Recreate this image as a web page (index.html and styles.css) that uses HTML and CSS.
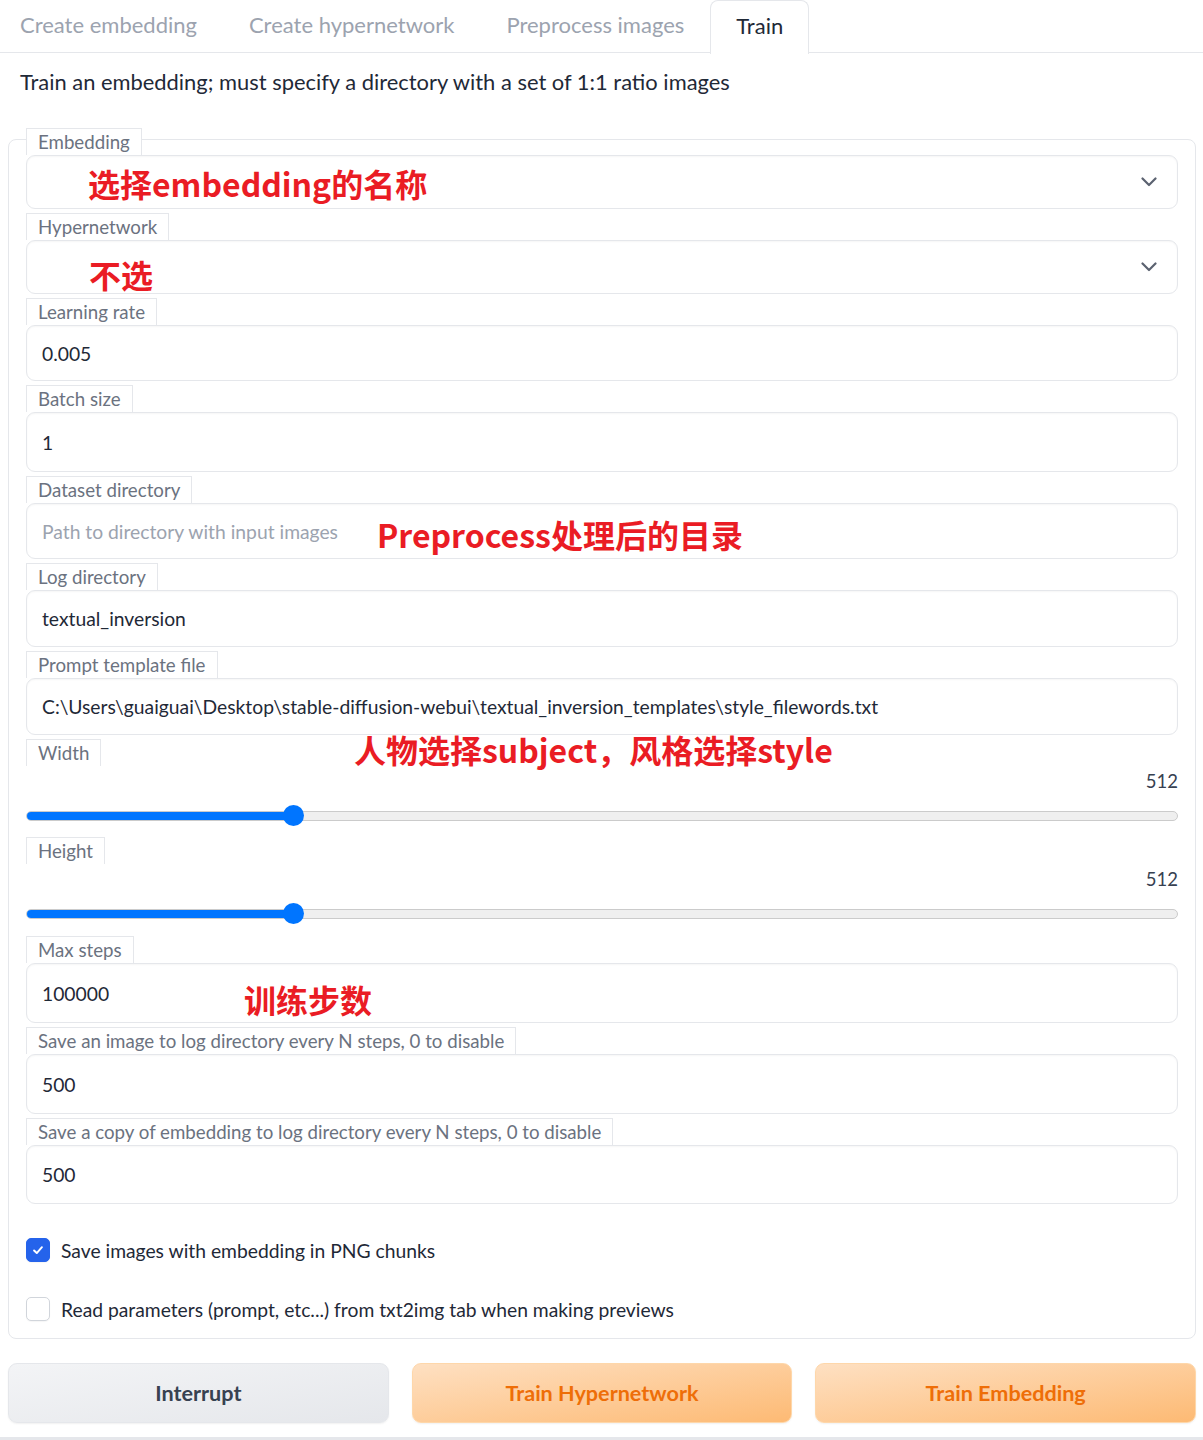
FILE: index.html
```html
<!DOCTYPE html>
<html lang="en">
<head>
<meta charset="utf-8">
<title>Train</title>
<link rel="stylesheet" href="styles.css">
</head>
<body>
<div class="page">
  <div class="tabs">
    <div class="tab">Create embedding</div>
    <div class="tab">Create hypernetwork</div>
    <div class="tab">Preprocess images</div>
    <div class="tab active">Train</div>
  </div>
  <p class="desc">Train an embedding; must specify a directory with a set of 1:1 ratio images</p>

  <div class="panel">
    <div class="field first">
      <span class="label">Embedding</span>
      <div class="box dropdown">
        <svg class="chev" viewBox="0 0 16 10" width="16" height="10"><path d="M1.5 1.5 L8 8 L14.5 1.5" fill="none" stroke="#5b6270" stroke-width="2.2" stroke-linecap="round" stroke-linejoin="round"/></svg>
      </div>
    </div>
    <div class="field">
      <span class="label">Hypernetwork</span>
      <div class="box dropdown">
        <svg class="chev" viewBox="0 0 16 10" width="16" height="10"><path d="M1.5 1.5 L8 8 L14.5 1.5" fill="none" stroke="#5b6270" stroke-width="2.2" stroke-linecap="round" stroke-linejoin="round"/></svg>
      </div>
    </div>
    <div class="field">
      <span class="label">Learning rate</span>
      <div class="box text h56">0.005</div>
    </div>
    <div class="field">
      <span class="label">Batch size</span>
      <div class="box text h60">1</div>
    </div>
    <div class="field">
      <span class="label">Dataset directory</span>
      <div class="box text h56 placeholder">Path to directory with input images</div>
    </div>
    <div class="field">
      <span class="label">Log directory</span>
      <div class="box text h57">textual_inversion</div>
    </div>
    <div class="field">
      <span class="label">Prompt template file</span>
      <div class="box text h57">C:\Users\guaiguai\Desktop\stable-diffusion-webui\textual_inversion_templates\style_filewords.txt</div>
    </div>
    <div class="field slider-field">
      <span class="label">Width</span>
      <div class="num">512</div>
      <div class="slider">
        <div class="track"><div class="fill"></div></div>
        <div class="thumb"></div>
      </div>
    </div>
    <div class="field slider-field second">
      <span class="label">Height</span>
      <div class="num">512</div>
      <div class="slider">
        <div class="track"><div class="fill"></div></div>
        <div class="thumb"></div>
      </div>
    </div>
    <div class="field after-slider">
      <span class="label">Max steps</span>
      <div class="box text h60">100000</div>
    </div>
    <div class="field">
      <span class="label">Save an image to log directory every N steps, 0 to disable</span>
      <div class="box text h60">500</div>
    </div>
    <div class="field">
      <span class="label">Save a copy of embedding to log directory every N steps, 0 to disable</span>
      <div class="box text h59">500</div>
    </div>

    <div class="checks">
      <div class="check-row">
        <span class="cb checked"><svg viewBox="0 0 16 16" width="14" height="14"><path d="M3.5 8.5 L6.6 11.5 L12.5 4.8" fill="none" stroke="#fff" stroke-width="2.2" stroke-linecap="round" stroke-linejoin="round"/></svg></span>
        <span class="cb-text">Save images with embedding in PNG chunks</span>
      </div>
      <div class="check-row">
        <span class="cb"></span>
        <span class="cb-text">Read parameters (prompt, etc...) from txt2img tab when making previews</span>
      </div>
    </div>
  </div>

  <div class="buttons">
    <button class="btn secondary">Interrupt</button>
    <button class="btn primary">Train Hypernetwork</button>
    <button class="btn primary">Train Embedding</button>
  </div>
  <div class="footer"></div>

  <div class="note n1">选择embedding的名称</div>
  <div class="note n2">不选</div>
  <div class="note n3">Preprocess处理后的目录</div>
  <div class="note n4">人物选择subject，风格选择style</div>
  <div class="note n5">训练步数</div>
</div>
</body>
</html>
```

FILE: styles.css
```css
* { box-sizing: border-box; }

html, body {
  margin: 0;
  padding: 0;
  background: #ffffff;
}

body {
  font-family: "Lato", "Noto Sans", "Liberation Sans", sans-serif;
  color: #1f2937;
}

.page {
  position: relative;
  width: 1203px;
  min-height: 1440px;
}

/* Tabs */
.tabs {
  display: flex;
  height: 53px;
  border-bottom: 1px solid #e5e7eb;
  margin-left: -6px;
}

.tab {
  padding: 0 26px;
  height: 53px;
  line-height: 50px;
  font-size: 22px;
  color: #9ca3af;
  white-space: nowrap;
}

.tab.active {
  color: #1f2937;
  background: #fff;
  border: 1px solid #e5e7eb;
  border-bottom: none;
  border-radius: 8px 8px 0 0;
  height: 54px;
  margin-bottom: -1px;
  padding: 0 25px;
}

.desc {
  margin: 14px 0 0 20px;
  font-size: 21.9px;
  line-height: 30px;
  color: #1f2937;
}

/* Panel */
.panel {
  margin: 42px 7px 0 8px;
  border: 1px solid #e5e7eb;
  border-radius: 8px;
  padding: 0 17px 17px 17px;
  display: flex;
  flex-direction: column;
}

.field {
  display: flex;
  flex-direction: column;
  align-items: flex-start;
  margin-top: 4px;
}

.field.first { margin-top: -12px; }
.field.after-slider { margin-top: 0; }

.label {
  display: block;
  height: 27px;
  line-height: 26px;
  padding: 0 11px;
  font-size: 18.7px;
  color: #6b7280;
  background: #fff;
  border: 1px solid #e5e7eb;
  border-bottom: none;
  white-space: nowrap;
}

.box {
  width: 100%;
  border: 1px solid #e5e7eb;
  border-radius: 9px;
  background: #fff;
  box-shadow: inset 0 1px 2px rgba(0, 0, 0, 0.04);
}

.dropdown {
  height: 54px;
  display: flex;
  align-items: center;
  justify-content: flex-end;
  padding-right: 20px;
}

.chev { display: block; }

.text {
  display: flex;
  align-items: center;
  padding: 0 15px;
  font-size: 19.3px;
  color: #1f2937;
  white-space: nowrap;
  overflow: hidden;
}

.text.placeholder { color: #9ca3af; }

.h56 { height: 56px; }
.h57 { height: 57px; }
.h59 { height: 59px; }
.h60 { height: 60px; }

/* Sliders */
.slider-field { align-items: stretch; margin-top: 4px; }
.slider-field .label { align-self: flex-start; }
.slider-field.second { margin-top: -1px; }

.num {
  height: 27px;
  padding-top: 3px;
  line-height: 24px;
  text-align: right;
  font-size: 18.5px;
  color: #374151;
}

.slider {
  position: relative;
  height: 45px;
  display: flex;
  align-items: center;
}

.track {
  width: 100%;
  height: 10px;
  border-radius: 5px;
  background: #efefef;
  border: 1px solid #cbcbcb;
  overflow: hidden;
}

.fill {
  width: 23.2%;
  height: 100%;
  background: #0075ff;
}

.thumb {
  position: absolute;
  left: calc(23.2% - 10px);
  top: 50%;
  width: 21px;
  height: 21px;
  margin-top: -10.5px;
  border-radius: 50%;
  background: #0075ff;
}

/* Checkboxes */
.checks {
  margin-top: 34px;
  display: flex;
  flex-direction: column;
  gap: 35px;
}

.check-row {
  display: flex;
  align-items: center;
  gap: 11px;
  height: 24px;
}

.cb {
  width: 24px;
  height: 24px;
  border-radius: 5px;
  border: 1px solid #d1d5db;
  background: #fff;
  display: flex;
  align-items: center;
  justify-content: center;
  box-shadow: 0 1px 1px rgba(0, 0, 0, 0.04);
}

.cb.checked {
  background: #2563eb;
  border-color: #2563eb;
}

.cb-text {
  font-size: 19.3px;
  color: #1f2937;
}

/* Buttons */
.buttons {
  display: grid;
  grid-template-columns: 1fr 1fr 1fr;
  gap: 23px;
  margin: 24px 7px 0 8px;
}

.btn {
  height: 60px;
  border-radius: 9px;
  font-family: "Lato", "Noto Sans", sans-serif;
  font-size: 21.6px;
  font-weight: 700;
  cursor: pointer;
  box-shadow: 0 1px 2px rgba(0, 0, 0, 0.06);
}

.btn.secondary {
  background: linear-gradient(to bottom right, #f3f4f6, #e5e7eb);
  border: 1px solid #e5e7eb;
  color: #374151;
}

.btn.primary {
  background: linear-gradient(to bottom right, #fee0c2, #fdba74);
  border: 1px solid #fed7aa;
  color: #ee6e08;
}

.footer {
  margin-top: 14px;
  height: 3px;
  background: #e5e7eb;
}

/* Annotations */
.note {
  position: absolute;
  font-family: "Noto Sans CJK SC", "Noto Sans", sans-serif;
  font-weight: 700;
  font-size: 32px;
  line-height: 40px;
  color: #ea1c24;
  white-space: nowrap;
}

.n1 { left: 88px; top: 163px; }
.n2 { left: 89px; top: 254px; }
.n3 { left: 377px; top: 514px; }
.n4 { left: 354px; top: 729px; }
.n5 { left: 244px; top: 979px; }
```
